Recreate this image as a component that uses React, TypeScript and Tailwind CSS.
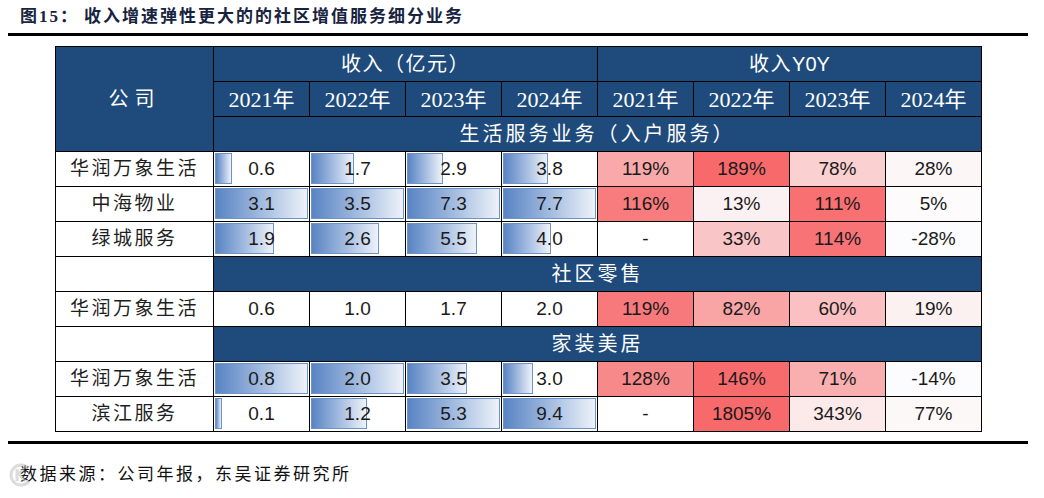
import React from 'react';

// 收入增速弹性更大的的社区增值服务细分业务 — table figure

const SERIF = "font-['Liberation_Serif','Noto_Sans_CJK_SC',serif]";
const SANS = "font-['Liberation_Sans','Noto_Sans_CJK_SC',sans-serif]";

type Rev = { v: string; bar?: number };
type Yoy = { v: string; bg: string };
type DataRow = { name: string; rev: Rev[]; yoy: Yoy[] };

const YEARS = ['2021年', '2022年', '2023年', '2024年'];

const lifeRows: DataRow[] = [
  {
    name: '华润万象生活',
    rev: [
      { v: '0.6', bar: 17 },
      { v: '1.7', bar: 43 },
      { v: '2.9', bar: 36 },
      { v: '3.8', bar: 45 },
    ],
    yoy: [
      { v: '119%', bg: 'bg-[#f9a9aa]' },
      { v: '189%', bg: 'bg-[#f8696b]' },
      { v: '78%', bg: 'bg-[#fbd0d1]' },
      { v: '28%', bg: 'bg-[#fdf6f7]' },
    ],
  },
  {
    name: '中海物业',
    rev: [
      { v: '3.1', bar: 93 },
      { v: '3.5', bar: 93 },
      { v: '7.3', bar: 93 },
      { v: '7.7', bar: 93 },
    ],
    yoy: [
      { v: '116%', bg: 'bg-[#f87b7d]' },
      { v: '13%', bg: 'bg-[#fcf1f2]' },
      { v: '111%', bg: 'bg-[#f87072]' },
      { v: '5%', bg: 'bg-[#fdfbfc]' },
    ],
  },
  {
    name: '绿城服务',
    rev: [
      { v: '1.9', bar: 59 },
      { v: '2.6', bar: 68 },
      { v: '5.5', bar: 70 },
      { v: '4.0', bar: 48 },
    ],
    yoy: [
      { v: '-', bg: 'bg-white' },
      { v: '33%', bg: 'bg-[#fac5c6]' },
      { v: '114%', bg: 'bg-[#f87375]' },
      { v: '-28%', bg: 'bg-[#fcfcfe]' },
    ],
  },
];

const retailRows: DataRow[] = [
  {
    name: '华润万象生活',
    rev: [{ v: '0.6' }, { v: '1.0' }, { v: '1.7' }, { v: '2.0' }],
    yoy: [
      { v: '119%', bg: 'bg-[#f8797b]' },
      { v: '82%', bg: 'bg-[#f9a5a6]' },
      { v: '60%', bg: 'bg-[#fbc1c2]' },
      { v: '19%', bg: 'bg-[#fcf1f1]' },
    ],
  },
];

const homeRows: DataRow[] = [
  {
    name: '华润万象生活',
    rev: [
      { v: '0.8', bar: 93 },
      { v: '2.0', bar: 93 },
      { v: '3.5', bar: 60 },
      { v: '3.0', bar: 30 },
    ],
    yoy: [
      { v: '128%', bg: 'bg-[#f8898b]' },
      { v: '146%', bg: 'bg-[#f86b6d]' },
      { v: '71%', bg: 'bg-[#f9afb0]' },
      { v: '-14%', bg: 'bg-[#fcfcfe]' },
    ],
  },
  {
    name: '滨江服务',
    rev: [
      { v: '0.1', bar: 7 },
      { v: '1.2', bar: 56 },
      { v: '5.3', bar: 93 },
      { v: '9.4', bar: 93 },
    ],
    yoy: [
      { v: '-', bg: 'bg-white' },
      { v: '1805%', bg: 'bg-[#f8696b]' },
      { v: '343%', bg: 'bg-[#fce9ea]' },
      { v: '77%', bg: 'bg-[#fdf8f8]' },
    ],
  },
];

const cell = 'border-r border-b border-black flex items-center justify-center';
const blue = 'bg-[#1f4a7c] text-white';

function Rows({ rows }: { rows: DataRow[] }) {
  return (
    <>
      {rows.map((r, i) => (
        <React.Fragment key={r.name + i}>
          <div className={`${cell} ${SERIF} text-[19px] tracking-[2.5px] text-[#1e1e1e]`}>{r.name}</div>
          {r.rev.map((c, j) => (
            <div key={j} className={`${cell} relative bg-white`}>
              {c.bar && (
                <div
                  className="absolute left-[1px] top-[1px] bottom-[2px] border border-[#6d93cb] bg-gradient-to-r from-[#5984c3] to-[#eef2f9]"
                  style={{ width: c.bar }}
                />
              )}
              <span className={`relative ${SANS} text-[19px] text-[#1a1a1a]`}>{c.v}</span>
            </div>
          ))}
          {r.yoy.map((c, j) => (
            <div key={j} className={`${cell} ${c.bg}`}>
              <span className={`${SANS} text-[19px] text-[#1a1a1a]`}>{c.v}</span>
            </div>
          ))}
        </React.Fragment>
      ))}
    </>
  );
}

function Section({ label, blank }: { label: string; blank?: boolean }) {
  return (
    <>
      {blank && <div className={`${cell} bg-white`} />}
      <div className={`${cell} ${blue} col-span-8 ${SERIF} text-[20px] tracking-[3px]`}>{label}</div>
    </>
  );
}

export default function App() {
  return (
    <div className="w-[1044px] h-[498px] bg-white relative overflow-hidden">
      {/* Title */}
      <div className={`h-[33px] flex items-center pl-[20px] ${SERIF} font-bold text-[17px] text-[#17233f] tracking-[2px]`}>
        <span>图15：</span>
        <span className="ml-[5px]">收入增速弹性更大的的社区增值服务细分业务</span>
      </div>
      <div className="ml-[8px] w-[1020px] h-[3px] bg-black" />

      {/* Table */}
      <div className="ml-[55px] mt-[10px] w-[927px] grid grid-cols-[158px_repeat(8,96px)] grid-rows-[repeat(11,35px)] border-l border-t border-black">
        <div className={`${cell} ${blue} row-span-3 ${SERIF} text-[20px] tracking-[6px]`}>公司</div>
        <div className={`${cell} ${blue} col-span-4 ${SERIF} text-[20px] tracking-[1.5px]`}>收入（亿元）</div>
        <div className={`${cell} ${blue} col-span-4 ${SERIF} text-[20px]`}>
          <span className="tracking-[1.5px]">收入</span>
          <span className={`${SANS}`}>Y0Y</span>
        </div>
        {[...YEARS, ...YEARS].map((y, i) => (
          <div key={i} className={`${cell} ${blue} ${SERIF} text-[22px]`}>{y}</div>
        ))}
        <Section label="生活服务业务（入户服务）" />
        <Rows rows={lifeRows} />
        <Section label="社区零售" blank />
        <Rows rows={retailRows} />
        <Section label="家装美居" blank />
        <Rows rows={homeRows} />
      </div>

      <div className="ml-[8px] mt-[9px] w-[1020px] h-[3px] bg-black" />

      {/* Source */}
      <div className="relative mt-[21px] pl-[20px] h-[20px] flex items-center">
        <span className={`${SERIF} text-[17px] tracking-[2.5px] text-[#111]`}>数据来源：公司年报，东吴证券研究所</span>
        {/* faint watermark logo */}
        <svg className="absolute left-[8px] top-[-3px] opacity-50" width="26" height="26" viewBox="0 0 26 26">
          <path d="M20 6 A10 10 0 1 0 21 19" fill="none" stroke="#bbb" strokeWidth="3" />
          <path d="M9 7 V19 M9 13 L16 7 M11 12 L17 19" fill="none" stroke="#bbb" strokeWidth="3" />
        </svg>
      </div>
    </div>
  );
}
